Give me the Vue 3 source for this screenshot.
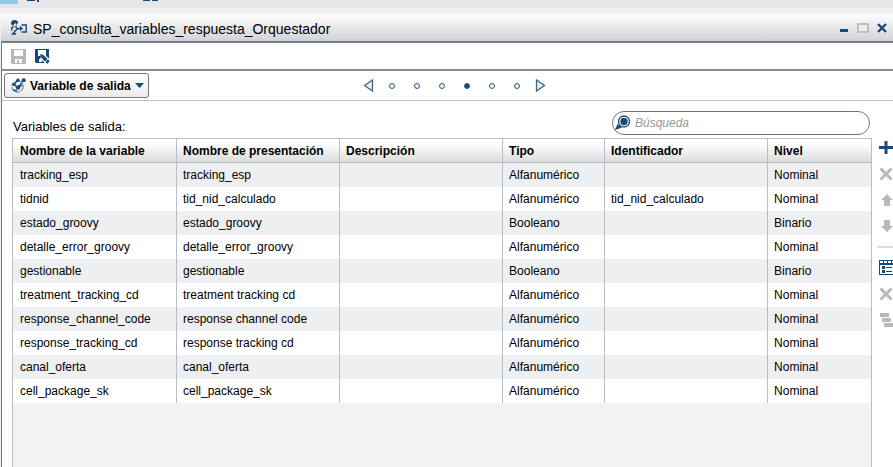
<script setup>
import { ref, computed } from 'vue'

const search = ref('')
const step = ref(4)

const columns = [
  { key: 'name', label: 'Nombre de la variable' },
  { key: 'display', label: 'Nombre de presentación' },
  { key: 'description', label: 'Descripción' },
  { key: 'type', label: 'Tipo' },
  { key: 'id', label: 'Identificador' },
  { key: 'level', label: 'Nivel' }
]

const alpha = { type: 'Alfanumérico', level: 'Nominal' }
const bool = { type: 'Booleano', level: 'Binario' }
const rows = [
  { name: 'tracking_esp', display: 'tracking_esp', ...alpha },
  { name: 'tidnid', display: 'tid_nid_calculado', id: 'tid_nid_calculado', ...alpha },
  { name: 'estado_groovy', display: 'estado_groovy', ...bool },
  { name: 'detalle_error_groovy', display: 'detalle_error_groovy', ...alpha },
  { name: 'gestionable', display: 'gestionable', ...bool },
  { name: 'treatment_tracking_cd', display: 'treatment tracking cd', ...alpha },
  { name: 'response_channel_code', display: 'response channel code', ...alpha },
  { name: 'response_tracking_cd', display: 'response tracking cd', ...alpha },
  { name: 'canal_oferta', display: 'canal_oferta', ...alpha },
  { name: 'cell_package_sk', display: 'cell_package_sk', ...alpha }
]

const visibleRows = computed(() =>
  rows.filter((r) => r.name.toLowerCase().includes(search.value.toLowerCase()))
)
</script>

<template>
  <div class="app">
    <div class="strip">
      <span class="tab"></span>
      <svg class="strip-icon first" width="14" height="2" viewBox="0 0 14 2"><path d="M0 0h8v1H0zM10 0h2v2h-2z" /></svg>
      <svg class="strip-icon" width="16" height="2" viewBox="0 0 16 2"><path d="M0 0h7v1H0zM9 0h6v1H9z" /></svg>
    </div>

    <section class="window">
      <header class="titlebar">
        <svg width="16" height="15" viewBox="0 0 16 15" fill="none">
          <path d="M0 3.500C0 1 1.500 0 3.500 0S7 1 7 2.800L6 4.500 4.500 3 2.500 5H.5z" fill="#174a76" />
          <path d="M2 4.500v1.700h3.500V4" stroke="#7893aa" />
          <path d="M2.500 6.500L.7 8v2.500M4.500 6.500l2 2.500-2 1.500-2.500 3.300M.5 14h4.500" stroke="#174a76" stroke-width="1.500" />
          <path d="M7 8.500h3" stroke="#174a76" stroke-width="1.500" /><path d="M9 5.800l3 2.700-3 2.700z" fill="#174a76" />
          <path d="M10.500 5h4.700v7h-4.700" stroke="#174a76" stroke-width="1.400" />
        </svg>
        <h1>SP_consulta_variables_respuesta_Orquestador</h1>
        <div class="controls">
          <button type="button" aria-label="Minimizar"><svg width="14" height="14" viewBox="0 0 14 14"><path d="M3 8h8v3H3z" fill="#174a76" /></svg></button>
          <button type="button" aria-label="Maximizar" disabled><svg width="14" height="14" viewBox="0 0 14 14"><path d="M2 3h10v8H2z" fill="#eceded" stroke="#b3b3b3" stroke-width="1.500" /></svg></button>
          <button type="button" aria-label="Cerrar"><svg width="14" height="14" viewBox="0 0 14 14"><path d="M3 3l8 8M11 3l-8 8" stroke="#174a76" stroke-width="2.400" /></svg></button>
        </div>
      </header>

      <div class="toolbar">
        <button type="button" aria-label="Guardar" disabled>
          <svg width="15" height="15" viewBox="0 0 15 15"><path d="M0 0h15v15H1l-1-1z" fill="#b7b7b7" /><path d="M3 1h9v6H3zM4 10h7v4H4z" fill="#fff" /><path d="M6 11h2v3H6z" fill="#b7b7b7" /></svg>
        </button>
        <button type="button" aria-label="Guardar como">
          <svg width="16" height="15" viewBox="0 0 16 15"><path d="M0 0h14v14H1l-1-1z" fill="#174a76" /><path d="M3 1h8v6H3zM4 10h3v3H4z" fill="#fff" /><path d="M7 7l8 8" stroke="#fff" stroke-width="6" /><path d="M5 5l4 1-3 3z" fill="#174a76" /><path d="M7.500 7.500l6 6" stroke="#174a76" stroke-width="3.600" /><path d="M13 10l-3 3" stroke="#fff" stroke-width=".8" /></svg>
        </button>
      </div>

      <nav class="steps">
        <button type="button" class="picker">
          <svg width="15" height="15" viewBox="0 0 15 15" fill="none" stroke="#174a76">
            <circle cx="6.500" cy="8.500" r="5.700" stroke="#4a708f" stroke-dasharray="5 1" />
            <path d="M3 6.500l4 3.500 5-8M3 6.500L7 2M7 10l4-3M2 12l4 1" stroke-width="1.300" />
            <g fill="#174a76" stroke="none"><circle cx="3" cy="6.500" r="1.600" /><circle cx="7" cy="2.200" r="1.700" /><circle cx="12.700" cy="2.200" r="2" /><circle cx="7" cy="9.500" r="2.200" /></g>
          </svg>
          <span>Variable de salida</span>
          <svg width="9" height="5" viewBox="0 0 9 5"><path d="M0 0h9L4.500 5z" fill="#174a76" /></svg>
        </button>
        <div class="pager">
          <button type="button" class="arrow" aria-label="Anterior" @click="step = Math.max(1, step - 1)"><svg width="11" height="13" viewBox="0 0 11 13"><path d="M9.500 1v11L1.500 6.500z" fill="#edf0f2" stroke="#3d6688" stroke-width="1.300" /></svg></button>
          <button v-for="n in 6" :key="n" type="button" class="dot" :class="{ active: n === step }" :aria-label="'Paso ' + n" @click="step = n"></button>
          <button type="button" class="arrow" aria-label="Siguiente" @click="step = Math.min(6, step + 1)"><svg width="11" height="13" viewBox="0 0 11 13"><path d="M1.500 1v11l8-5.500z" fill="#edf0f2" stroke="#3d6688" stroke-width="1.300" /></svg></button>
        </div>
      </nav>

      <main class="content">
        <div class="panel">
          <div class="panel-head">
            <h2>Variables de salida:</h2>
            <label class="search">
              <svg width="16" height="16" viewBox="0 0 16 16"><path d="M0 15l2.500-6L7 12.500z" fill="#174a76" /><circle cx="9" cy="6.500" r="5.500" fill="#fff" stroke="#174a76" stroke-width="1.300" /><circle cx="9" cy="6.500" r="3.700" fill="#174a76" /></svg>
              <input v-model="search" type="text" placeholder="Búsqueda" aria-label="Búsqueda" />
            </label>
          </div>
          <div class="grid">
            <table>
              <colgroup><col v-for="c in columns" :key="c.key" :class="'col-' + c.key" /></colgroup>
              <thead>
                <tr><th v-for="c in columns" :key="c.key" scope="col">{{ c.label }}</th></tr>
              </thead>
              <tbody>
                <tr v-for="r in visibleRows" :key="r.name">
                  <td v-for="c in columns" :key="c.key">{{ r[c.key] }}</td>
                </tr>
              </tbody>
            </table>
          </div>
        </div>

        <aside class="actions">
          <button type="button" aria-label="Agregar"><svg width="14" height="14" viewBox="0 0 14 14"><path d="M7 0v13M0 6.500h14" stroke="#174a76" stroke-width="3" /></svg></button>
          <button type="button" aria-label="Eliminar" disabled><svg width="14" height="14" viewBox="0 0 14 14"><path d="M1.500 1.500l11 11M12.500 1.500l-11 11" stroke="#b9b9b9" stroke-width="3" /></svg></button>
          <button type="button" aria-label="Subir" disabled><svg width="14" height="14" viewBox="0 0 14 14"><path d="M8 1l6 6h-3v6H5V7H2z" fill="#b9b9b9" /></svg></button>
          <button type="button" aria-label="Bajar" disabled><svg width="14" height="14" viewBox="0 0 14 14"><path d="M8 13l6-6h-3V1H5v6H2z" fill="#b9b9b9" /></svg></button>
          <hr />
          <button type="button" aria-label="Seleccionar columnas"><svg width="16" height="16" viewBox="0 0 16 16"><path d="M0 0h16v15H0z" fill="#174a76" /><path d="M1 1h3v2H1zM5 1h3v2H5zM9 1h3v2H9zM13 1h2v2h-2zM1 5h14v9H1z" fill="#fff" /><path d="M3 6h3v3H3zM3 10h3v3H3zM7 7h6v1H7zM7 11h6v1H7z" fill="#174a76" /></svg></button>
          <button type="button" aria-label="Quitar" disabled><svg width="14" height="14" viewBox="0 0 14 14"><path d="M1.500 1.500l11 11M12.500 1.500l-11 11" stroke="#b9b9b9" stroke-width="3" /></svg></button>
          <button type="button" aria-label="Ordenar" disabled><svg width="14" height="14" viewBox="0 0 14 14"><path d="M1 0h9v4H1zM3 5h9v4H3zM5 10h9v4H5z" fill="#b9b9b9" /></svg></button>
        </aside>
      </main>
    </section>
  </div>
</template>

<style>
body {
  margin: 0;
  overflow: hidden;
}
</style>

<style scoped>
* {
  box-sizing: border-box;
}
.app {
  display: flex;
  flex-direction: column;
  height: 100vh;
  background: #f0f0f0;
  font-family: "Liberation Sans", Arial, sans-serif;
  font-size: 12px;
  color: #000;
}
svg {
  display: block;
  flex: none;
}
button {
  display: flex;
  align-items: center;
  justify-content: center;
  padding: 0;
  border: 0;
  background: none;
  font: inherit;
  color: inherit;
}
.strip {
  display: flex;
  flex: none;
  height: 8px;
  margin-bottom: 6px;
  background: #e6e6e6;
}
.tab {
  width: 18px;
  height: 4px;
  background: #94c9ea;
}
.strip-icon {
  margin-left: 102px;
  fill: #174a76;
}
.strip-icon.first {
  margin-left: 9px;
}
.window {
  display: flex;
  flex: 1;
  flex-direction: column;
  min-height: 0;
  margin-left: 1px;
  border-left: 1px solid #6c7789;
  background: #fff;
}
.titlebar {
  display: flex;
  flex: none;
  align-items: center;
  gap: 6px;
  height: 29px;
  margin-left: -1px;
  padding: 0 4px 0 10px;
  border-bottom: 2px solid #747d8e;
  background: linear-gradient(#fff, #d0d2d7);
}
h1 {
  flex: 1;
  margin: 0;
  padding-top: 2px;
  font-size: 14px;
  font-weight: 400;
  line-height: 18px;
}
.controls {
  display: flex;
  gap: 5px;
}
.toolbar {
  display: flex;
  flex: none;
  align-items: center;
  gap: 9px;
  height: 28px;
  padding-left: 9px;
  border-bottom: 2px solid #858c9b;
}
.steps {
  display: grid;
  flex: none;
  grid-template-columns: 1fr auto 1fr;
  align-items: center;
  height: 30px;
  padding-left: 2px;
  border-bottom: 1px solid #bcbfca;
}
.picker {
  justify-self: start;
  gap: 4px;
  height: 25px;
  padding: 0 4px 0 6px;
  border: 1px solid #74777e;
  border-radius: 3px;
  background: linear-gradient(#fff, #ececed);
  font-weight: 700;
}
.pager {
  display: flex;
  align-items: center;
  gap: 19px;
  padding-left: 12px;
}
.arrow {
  margin: 0 -4px;
}
.dot {
  width: 6px;
  height: 6px;
  border: 1px solid #2d5b81;
  border-radius: 3px;
  background: #edf0f2;
}
.dot.active {
  background: #174a76;
}
.content {
  display: flex;
  flex: 1;
  gap: 5px;
  min-height: 0;
}
.panel {
  display: flex;
  flex: 1;
  flex-direction: column;
  min-width: 0;
  padding: 10px 0 0 10px;
}
.panel-head {
  display: flex;
  flex: none;
  align-items: flex-start;
  justify-content: space-between;
  height: 27px;
  padding-right: 2px;
}
h2 {
  margin: 9px 0 0 1px;
  font-size: 13px;
  font-weight: 400;
  line-height: 14px;
}
.search {
  display: flex;
  align-items: center;
  gap: 4px;
  width: 258px;
  height: 24px;
  padding: 0 12px 0 2px;
  border: 1px solid #69768a;
  border-radius: 12px;
}
.search input {
  flex: 1;
  min-width: 0;
  padding: 0;
  border: 0;
  outline: 0;
  background: none;
  font: inherit;
}
.search input::placeholder {
  color: #999;
  font-style: italic;
  opacity: 1;
}
.grid {
  flex: 1;
  min-height: 0;
  border: 1px solid #b8bdc7;
  border-bottom: 0;
  background: #f2f2f2;
}
table {
  width: 100%;
  table-layout: fixed;
  border-collapse: separate;
  border-spacing: 0;
}
.col-name {
  width: 164px;
}
.col-display,
.col-description,
.col-id {
  width: 19%;
}
.col-type {
  width: 102px;
}
th,
td {
  height: 24px;
  padding: 0 0 0 6px;
  border-right: 1px solid #b8bdc7;
  text-align: left;
  line-height: 14px;
  white-space: nowrap;
}
th:first-child,
td:first-child {
  padding-left: 7px;
}
th:last-child,
td:last-child {
  border-right: 0;
}
th {
  border-bottom: 1px solid #b8bdc7;
  background: linear-gradient(#fff 20%, #dcdcdc);
}
td {
  background: #fff;
}
tbody tr:nth-child(odd) td {
  background: #eeeff1;
}
.actions {
  flex: none;
  width: 16px;
  padding-top: 34px;
  overflow: hidden;
}
.actions button {
  justify-content: flex-start;
  height: 26px;
  padding-left: 2px;
}
hr {
  height: 2px;
  margin: 7px 0;
  border: 0;
  background: #dcdde0;
}
</style>
